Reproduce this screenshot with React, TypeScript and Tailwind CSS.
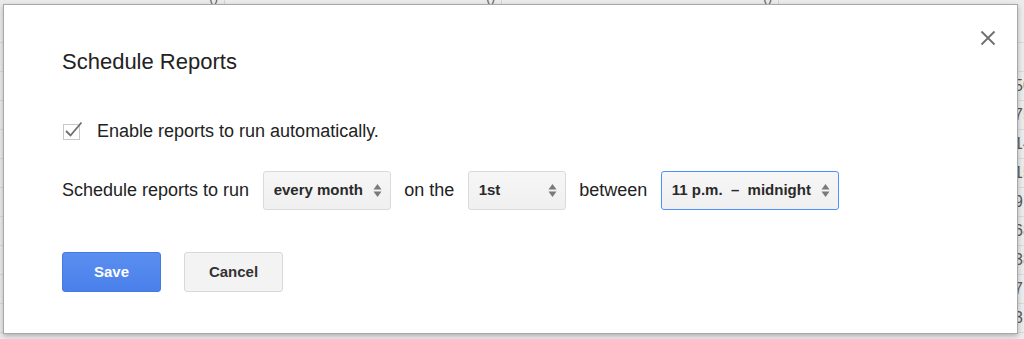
import React from "react";

const sans = { fontFamily: '"Liberation Sans", Arial, sans-serif' };

const rightNumbers = ["", "50", "75", "14", "15", "9", "68", "38", "7", "3"];

function SelectArrows() {
  return (
    <svg width="9" height="15" viewBox="0 0 9 15" className="shrink-0">
      <polygon points="0.5,6.5 4.5,1 8.5,6.5" fill="#7a7a7a" />
      <polygon points="0.5,8.5 4.5,14 8.5,8.5" fill="#7a7a7a" />
    </svg>
  );
}

interface FakeSelectProps {
  label: string;
  width: string;
  focused?: boolean;
}

function FakeSelect({ label, width, focused }: FakeSelectProps) {
  return (
    <div
      className={`${width} h-[39px] flex items-center justify-between pl-[10px] pr-[8px] rounded-[3px] border bg-gradient-to-b from-[#f6f6f6] to-[#f0f0f0] ${
        focused ? "border-[#4d90fe]" : "border-[#dadada]"
      }`}
    >
      <span className="text-[15px] font-bold text-[#2a2a2a] whitespace-pre">{label}</span>
      <SelectArrows />
    </div>
  );
}

function SheetBackground() {
  return (
    <div className="flex flex-col w-full h-full bg-[#ebebeb] text-[#5a5a5a]" style={sans}>
      <div className="h-[43px] shrink-0 grid grid-cols-[225px_277px_277px_1fr] border-b border-[#d9d9d9]">
        <div className="border-r border-[#d4d4d4] flex justify-end pr-[6px] -mt-[12px] text-[13px]">()</div>
        <div className="border-r border-[#d4d4d4] flex justify-end pr-[6px] -mt-[12px] text-[13px]">()</div>
        <div className="border-r border-[#d4d4d4] flex justify-end pr-[6px] -mt-[12px] text-[13px]">()</div>
        <div />
      </div>
      {rightNumbers.map((n, i) => (
        <div
          key={i}
          className="h-[29px] shrink-0 grid grid-cols-[225px_277px_277px_1fr] border-b border-[#d9d9d9]"
        >
          <div className="border-r border-[#d4d4d4]" />
          <div className="border-r border-[#d4d4d4]" />
          <div className="border-r border-[#d4d4d4]" />
          <div className="flex items-center pl-[235px] text-[16px]">{n}</div>
        </div>
      ))}
    </div>
  );
}

export default function App() {
  return (
    <div className="relative w-[1024px] h-[339px] overflow-hidden" style={sans}>
      <SheetBackground />

      <div className="absolute left-[3px] top-[4px] w-[1015px] h-[330px] bg-white border border-[#a8a8a8] shadow-[0_2px_5px_rgba(0,0,0,0.25)] text-[#222]">
        <button className="absolute right-[21px] top-[25px] w-[16px] h-[16px]" aria-label="Close">
          <svg width="16" height="16" viewBox="0 0 16 16">
            <path d="M1.5 1.5 L14.5 14.5 M14.5 1.5 L1.5 14.5" stroke="#6f6f6f" strokeWidth="1.8" fill="none" />
          </svg>
        </button>

        <div className="flex flex-col pl-[58px] pt-[44px]">
          <h2 className="text-[22px] leading-[26px] font-normal">Schedule Reports</h2>

          <label className="mt-[46px] h-[20px] flex items-center">
            <svg width="20" height="20" viewBox="0 0 20 20" className="ml-[1px] shrink-0">
              <rect x="0.5" y="3.5" width="16" height="15" fill="white" stroke="#c8c8c8" />
              <polyline points="3,10 7.5,14.5 18.5,1.5" fill="none" stroke="#6e6e6e" strokeWidth="1.8" />
            </svg>
            <span className="ml-[14px] text-[18px] leading-[20px]">Enable reports to run automatically.</span>
          </label>

          <div className="mt-[30px] flex items-center gap-[13.5px] text-[18px]">
            <span>Schedule reports to run</span>
            <FakeSelect label="every month" width="w-[128px]" />
            <span>on the</span>
            <FakeSelect label="1st" width="w-[98px]" />
            <span>between</span>
            <FakeSelect label={"11 p.m.\u00a0 –\u00a0 midnight"} width="w-[178px]" focused />
          </div>

          <div className="mt-[42px] flex gap-[23px]">
            <button className="w-[99px] h-[40px] rounded-[3px] bg-gradient-to-b from-[#5a8ef0] to-[#4a80ea] border border-[#4479e2] text-white text-[15px] font-bold">
              Save
            </button>
            <button className="w-[99px] h-[40px] rounded-[3px] bg-[#f3f3f3] border border-[#d8d8d8] text-[#333] text-[15px] font-bold">
              Cancel
            </button>
          </div>
        </div>
      </div>
    </div>
  );
}
